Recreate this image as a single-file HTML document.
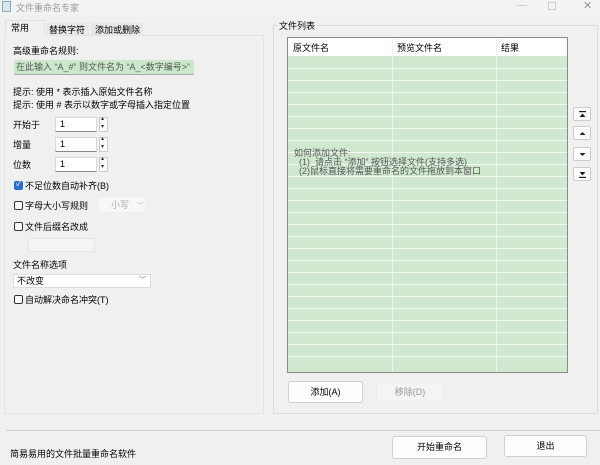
<!DOCTYPE html>
<html><head><meta charset="utf-8"><style>
*{box-sizing:border-box;margin:0;padding:0}
body{width:600px;height:465px;background:#f0f0f0;font-family:"Liberation Sans","Noto Sans CJK SC",sans-serif;font-size:9px;color:#000;position:relative;overflow:hidden}
.a{position:absolute;white-space:nowrap}
.inp{position:absolute;background:#fff;border:1px solid #d8d8d8;border-bottom:1px solid #888;padding-left:4px;line-height:13px;font-size:9px}
.spin{position:absolute;width:9px;height:15px;border:1px solid #ccc;background:#fafafa}
.spin:before{content:"▴";position:absolute;top:-3px;left:1px;font-size:6px;color:#333}
.spin:after{content:"▾";position:absolute;top:5px;left:1px;font-size:6px;color:#333}
.cb{position:absolute;width:9px;height:9px;border:1px solid #333;border-radius:2px;background:#fff}
.cb.on{background:#2a6fc9;border-color:#2a6fc9}
.btn{position:absolute;background:#fdfdfd;border:1px solid #d0d0d0;border-radius:3px;text-align:center;font-size:9px}
.row{position:absolute;left:0;width:279px;height:1px;background:#f2faf2}
.sb{position:absolute;left:573px;width:18px;height:14px;background:#fdfdfd;border:1px solid #ccc;border-radius:2px}
.sb svg{position:absolute;left:5px;top:3px}
</style></head><body>
<div class="a" style="left:0;top:0;width:600px;height:15px;background:#f3f3f3"></div>
<div class="a" style="left:2px;top:1px;width:9px;height:11px;background:#dde4f0;border:1px solid #8aa"></div>
<div class="a" style="left:16px;top:1px;color:#999;font-size:9px">文件重命名专家</div>
<div class="a" style="left:517px;top:0;color:#bbb;font-size:10px">—</div>
<div class="a" style="left:548px;top:2px;width:8px;height:8px;border:1px solid #ccc"></div>
<div class="a" style="left:583px;top:-1px;color:#999;font-size:11px">✕</div>

<div class="a" style="left:4px;top:35px;width:260px;height:379px;background:#f0f0f0;border:1px solid #e4e4e4"></div>
<div class="a" style="left:5px;top:20px;width:40px;height:16px;background:#f0f0f0;border:1px solid #e0e0e0;border-bottom:none"></div>
<div class="a" style="left:11px;top:21px">常用</div>
<div class="a" style="left:46px;top:23px;width:43px;height:12px;background:#e8e8e8"></div>
<div class="a" style="left:49px;top:23px">替换字符</div>
<div class="a" style="left:91px;top:23px;width:52px;height:12px;background:#e8e8e8"></div>
<div class="a" style="left:95px;top:23px">添加或删除</div>

<div class="a" style="left:13px;top:44px">高级重命名规则:</div>
<div class="a" style="left:14px;top:60px;width:180px;height:15px;background:#cce8cc;border-bottom:1px solid #aaa;color:#555;padding-left:2px;line-height:14px">在此输入 “A_#” 则文件名为 “A_&lt;数字编号&gt;”</div>
<div class="a" style="left:13px;top:85px">提示: 使用 * 表示插入原始文件名称</div>
<div class="a" style="left:13px;top:98px">提示: 使用 # 表示以数字或字母插入指定位置</div>
<div class="a" style="left:13px;top:118px">开始于</div>
<div class="inp" style="left:55px;top:117px;width:42px;height:15px">1</div><div class="spin" style="left:99px;top:117px"></div>
<div class="a" style="left:13px;top:138px">增量</div>
<div class="inp" style="left:55px;top:137px;width:42px;height:15px">1</div><div class="spin" style="left:99px;top:137px"></div>
<div class="a" style="left:13px;top:158px">位数</div>
<div class="inp" style="left:55px;top:157px;width:42px;height:15px">1</div><div class="spin" style="left:99px;top:157px"></div>
<div class="cb on" style="left:14px;top:181px"></div><div class="a" style="left:16px;top:178px;color:#fff;font-size:8px">✓</div>
<div class="a" style="left:25px;top:179px">不足位数自动补齐(B)</div>
<div class="cb" style="left:14px;top:201px"></div><div class="a" style="left:25px;top:199px">字母大小写规则</div>
<div class="a" style="left:99px;top:198px;width:46px;height:14px;background:#f7f7f7;color:#aaa;padding-left:12px;line-height:14px">小写<span style="margin-left:8px;font-size:7px">﹀</span></div>
<div class="cb" style="left:14px;top:222px"></div><div class="a" style="left:25px;top:220px">文件后缀名改成</div>
<div class="a" style="left:28px;top:238px;width:67px;height:14px;background:#f4f4f4;border:1px solid #e6e6e6"></div>
<div class="a" style="left:13px;top:258px">文件名称选项</div>
<div class="a" style="left:13px;top:274px;width:138px;height:14px;background:#fff;border:1px solid #ddd;padding-left:3px;line-height:12px">不改变<span style="position:absolute;right:4px;font-size:7px;color:#666">﹀</span></div>
<div class="cb" style="left:14px;top:295px"></div><div class="a" style="left:25px;top:293px">自动解决命名冲突(T)</div>

<div class="a" style="left:273px;top:25px;width:325px;height:389px;border:1px solid #dcdcdc"></div>
<div class="a" style="left:277px;top:19px;background:#f0f0f0;padding:0 2px">文件列表</div>
<div class="a" style="left:287px;top:37px;width:281px;height:336px;background:#cfe8cf;border:1px solid #8a8a8a">
 <div class="a" style="left:0;top:0;width:279px;height:18px;background:#fff"></div>
 <div class="a" style="left:5px;top:3px">原文件名</div>
 <div class="a" style="left:109px;top:3px">预览文件名</div>
 <div class="a" style="left:213px;top:3px">结果</div>
 <div class="a" style="left:104px;top:0;width:1px;height:334px;background:#eef6ee"></div>
 <div class="a" style="left:208px;top:0;width:1px;height:334px;background:#eef6ee"></div>
 <div class="row" style="top:30px"></div><div class="row" style="top:42px"></div><div class="row" style="top:54px"></div><div class="row" style="top:66px"></div><div class="row" style="top:78px"></div><div class="row" style="top:90px"></div><div class="row" style="top:102px"></div><div class="row" style="top:114px"></div><div class="row" style="top:126px"></div><div class="row" style="top:138px"></div><div class="row" style="top:150px"></div><div class="row" style="top:162px"></div><div class="row" style="top:174px"></div><div class="row" style="top:186px"></div><div class="row" style="top:198px"></div><div class="row" style="top:210px"></div><div class="row" style="top:222px"></div><div class="row" style="top:234px"></div><div class="row" style="top:246px"></div><div class="row" style="top:258px"></div><div class="row" style="top:270px"></div><div class="row" style="top:282px"></div><div class="row" style="top:294px"></div><div class="row" style="top:306px"></div><div class="row" style="top:318px"></div>
 <div class="a" style="left:6px;top:111px;color:#555;line-height:9px">如何添加文件:<br>&nbsp;&nbsp;(1)&nbsp; 请点击 “添加” 按钮选择文件(支持多选)<br>&nbsp;&nbsp;(2)鼠标直接将需要重命名的文件拖放到本窗口</div>
</div>
<div class="sb" style="top:107px"><svg width="7" height="7"><rect x="0" y="0" width="7" height="1.2" fill="#222"/><path d="M0.5 6L3.5 2.5L6.5 6Z" fill="#222"/></svg></div>
<div class="sb" style="top:126px"><svg width="7" height="7"><path d="M0.5 5L3.5 2L6.5 5Z" fill="#222"/></svg></div>
<div class="sb" style="top:147px"><svg width="7" height="7"><path d="M0.5 2L3.5 5L6.5 2Z" fill="#222"/></svg></div>
<div class="sb" style="top:167px"><svg width="7" height="7"><path d="M0.5 1L3.5 4.5L6.5 1Z" fill="#222"/><rect x="0" y="5.8" width="7" height="1.2" fill="#222"/></svg></div>
<div class="btn" style="left:288px;top:381px;width:75px;height:22px;line-height:20px">添加(A)</div>
<div class="btn" style="left:376px;top:382px;width:68px;height:20px;line-height:18px;background:#f4f4f4;border-color:#ececec;color:#999">移除(D)</div>

<div class="a" style="left:6px;top:430px;width:594px;height:1px;background:#cfcfcf"></div>
<div class="a" style="left:10px;top:447px">简易易用的文件批量重命名软件</div>
<div class="btn" style="left:392px;top:436px;width:95px;height:23px;line-height:21px">开始重命名</div>
<div class="btn" style="left:504px;top:435px;width:83px;height:22px;line-height:20px">退出</div>
</body></html>
